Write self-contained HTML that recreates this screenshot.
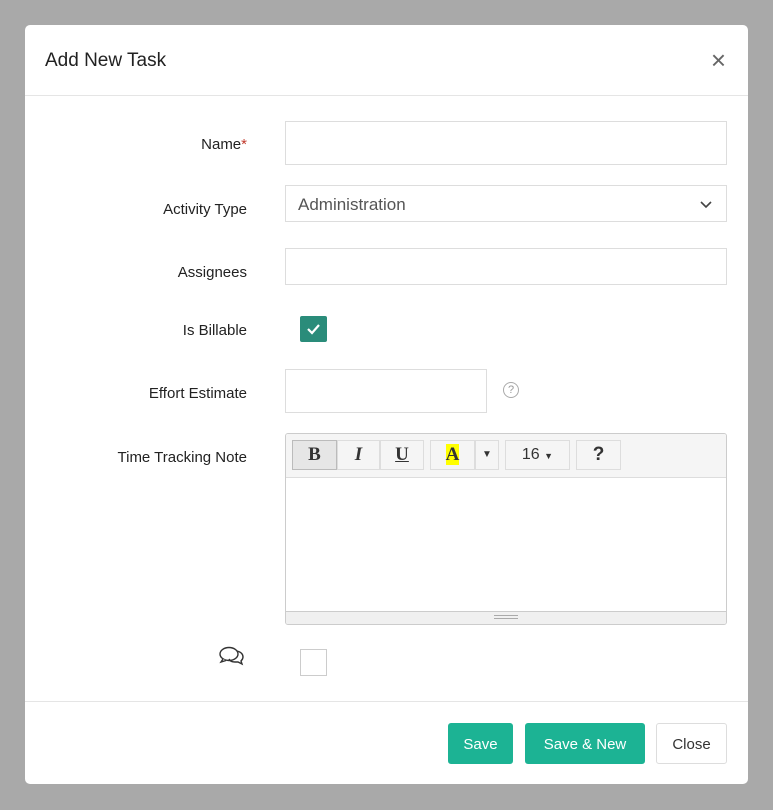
<!DOCTYPE html><html><head><style>
*{box-sizing:border-box}body{margin:0;width:773px;height:810px;background:#a9a9a9;font-family:"Liberation Sans",sans-serif;position:relative;overflow:hidden}
.m{position:absolute;left:25px;top:25px;width:723px;height:759px;background:#fff;border-radius:5px}
.hd{height:71px;border-bottom:1px solid #e5e5e5;position:relative}
.hd h4{margin:0;position:absolute;left:20px;top:25px;font-size:19px;font-weight:normal;color:#222}
.x{position:absolute;right:22px;top:20px;font-size:26px;color:#666}
.l{position:absolute;right:501px;font-size:15px;color:#222;text-align:right;font-weight:500}
.in{position:absolute;left:260px;border:1px solid #ddd;background:#fff}
.ft{position:absolute;top:676px;left:0;right:0;border-top:1px solid #e5e5e5}
.b{position:absolute;top:698px;height:41px;border-radius:3px;font-size:15px;line-height:43px;text-align:center}
.tb{position:absolute;top:6px;height:30px;border:1px solid #ddd;background:#f5f5f5;text-align:center;line-height:28px;font-family:"Liberation Serif",serif;font-weight:bold;font-size:19px;color:#333}
</style></head><body><div class="m">
<div class="hd"><h4>Add New Task</h4><div class="x">×</div></div>
<div class="l" style="top:111px">Name<span style="color:#c0392b">*</span></div>
<div class="in" style="top:96px;width:442px;height:44px"></div>
<div class="l" style="top:176px">Activity Type</div>
<div class="in" style="top:160px;width:442px;height:37px;padding:9px 12px;font-size:17px;color:#555">Administration<svg style="position:absolute;right:14px;top:15px" width="12" height="8"><path d="M1 1l5 5 5-5" stroke="#444" stroke-width="1.6" fill="none"/></svg></div>
<div class="l" style="top:239px">Assignees</div>
<div class="in" style="top:223px;width:442px;height:37px"></div>
<div class="l" style="top:297px">Is Billable</div>
<div style="position:absolute;left:275px;top:291px;width:27px;height:26px;background:#2a8c7a;border-radius:2px"><svg width="27" height="26"><path d="M8 13l4 4 7-8" stroke="#fff" stroke-width="2.2" fill="none"/></svg></div>
<div class="l" style="top:360px">Effort Estimate</div>
<div class="in" style="top:344px;width:202px;height:44px"></div>
<div style="position:absolute;left:478px;top:357px;width:16px;height:16px;border:1.3px solid #aaa;border-radius:50%;font-size:11px;color:#999;text-align:center;line-height:14px">?</div>
<div class="l" style="top:424px">Time Tracking Note</div>
<div class="in" style="top:408px;width:442px;height:192px;border-color:#ccc;border-radius:3px;overflow:hidden">
<div style="height:44px;background:#f5f5f5;border-bottom:1px solid #ddd;position:relative">
<div class="tb" style="left:6px;width:45px;background:#e6e6e6;border-color:#bbb">B</div>
<div class="tb" style="left:51px;width:43px;font-style:italic">I</div>
<div class="tb" style="left:94px;width:44px;text-decoration:underline">U</div>
<div class="tb" style="left:144px;width:45px"><span style="background:#ff0">A</span></div>
<div class="tb" style="left:189px;width:24px;font-size:10px">▼</div>
<div class="tb" style="left:219px;width:65px;font-family:'Liberation Sans';font-weight:normal;font-size:16px">16 <span style="font-size:9px">▼</span></div>
<div class="tb" style="left:290px;width:45px;font-family:'Liberation Sans'">?</div></div>
<div style="position:absolute;bottom:0;left:0;right:0;height:13px;background:#f0f0f0;border-top:1px solid #ccc"><div style="margin:3px auto;width:24px;height:4px;border-top:1px solid #aaa;border-bottom:1px solid #aaa"></div></div></div>
<svg style="position:absolute;left:193px;top:620px" width="30" height="26"><ellipse cx="11" cy="9" rx="9" ry="6.5" fill="#fff" stroke="#333" stroke-width="1.4"/><path d="M5 14l-2 3 5-1.5" fill="#fff" stroke="#333" stroke-width="1.4"/><path d="M19 6c4 1 6 3 6 6 0 2-1 3-2 4l1 3-4-2h-3c-3 0-5-1-6-3" fill="none" stroke="#333" stroke-width="1.4"/></svg>
<div style="position:absolute;left:275px;top:624px;width:27px;height:27px;border:1px solid #ccc"></div>
<div class="ft"></div>
<div class="b" style="left:423px;width:65px;background:#1cb394;color:#fff">Save</div>
<div class="b" style="left:500px;width:120px;background:#1cb394;color:#fff">Save &amp; New</div>
<div class="b" style="left:631px;width:71px;border:1px solid #ddd;color:#333;line-height:41px">Close</div>
</div></body></html>
